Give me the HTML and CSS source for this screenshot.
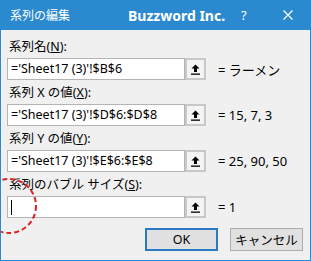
FILE: index.html
```html
<!DOCTYPE html>
<html lang="ja">

<head>
  <meta charset="utf-8">
  <title>系列の編集</title>
  <link rel="stylesheet" href="styles.css">
</head>

<body>
  <div class="window">
    <div class="titlebar">
      <span class="title">系列の編集</span>
      <span class="brand">Buzzword Inc.</span>
      <span class="help">?</span>
      <span class="close">
        <svg width="10" height="10" viewBox="0 0 10 10"><path d="M0.5 0.5L9.5 9.5M9.5 0.5L0.5 9.5" stroke="#fff" stroke-width="1.2" /></svg>
      </span>
    </div>
    <div class="content">
      <div class="field">
        <div class="label">系列名(<u>N</u>):</div>
        <div class="row">
          <div class="ref">='Sheet17 (3)'!$B$6</div>
          <div class="pick"><svg width="11" height="11" viewBox="0 0 11 11"><path d="M5.5 0.5L1.5 4.5H4V8H7V4.5H9.5Z" fill="#000" /><rect x="1" y="9.5" width="9" height="1.3" fill="#000" /></svg></div>
          <span class="value">= ラーメン</span>
        </div>
      </div>
      <div class="field">
        <div class="label">系列 X の値(<u>X</u>):</div>
        <div class="row">
          <div class="ref">='Sheet17 (3)'!$D$6:$D$8</div>
          <div class="pick"><svg width="11" height="11" viewBox="0 0 11 11"><path d="M5.5 0.5L1.5 4.5H4V8H7V4.5H9.5Z" fill="#000" /><rect x="1" y="9.5" width="9" height="1.3" fill="#000" /></svg></div>
          <span class="value">= 15, 7, 3</span>
        </div>
      </div>
      <div class="field">
        <div class="label">系列 Y の値(<u>Y</u>):</div>
        <div class="row">
          <div class="ref">='Sheet17 (3)'!$E$6:$E$8</div>
          <div class="pick"><svg width="11" height="11" viewBox="0 0 11 11"><path d="M5.5 0.5L1.5 4.5H4V8H7V4.5H9.5Z" fill="#000" /><rect x="1" y="9.5" width="9" height="1.3" fill="#000" /></svg></div>
          <span class="value">= 25, 90, 50</span>
        </div>
      </div>
      <div class="field">
        <div class="label">系列のバブル サイズ(<u>S</u>):</div>
        <div class="row">
          <div class="ref"><span class="caret"></span></div>
          <div class="pick"><svg width="11" height="11" viewBox="0 0 11 11"><path d="M5.5 0.5L1.5 4.5H4V8H7V4.5H9.5Z" fill="#000" /><rect x="1" y="9.5" width="9" height="1.3" fill="#000" /></svg></div>
          <span class="value">= 1</span>
        </div>
      </div>
      <div class="actions">
        <button class="btn btn-ok">OK</button>
        <button class="btn">キャンセル</button>
      </div>
    </div>
    <!-- 赤い点線の丸 -->
    <svg class="mark" width="40" height="60" viewBox="0 0 40 60">
      <circle cx="8" cy="28" r="27" fill="none" stroke="#d9252a" stroke-width="2" stroke-dasharray="5 3" />
    </svg>
  </div>
</body>

</html>
```

FILE: styles.css
```css
html {
  font-family: "Noto Sans", "Noto Sans CJK JP", sans-serif;
  font-size: 12px;
}

body {
  margin: 0;
}

.window {
  position: relative;
  width: 311px;
  height: 261px;
  box-sizing: border-box;
  background-color: #f0f0f0;
  border: 1px solid #2b89cf;
  border-top: 0;
  overflow: hidden;
}

.titlebar {
  height: 30px;
  margin: 0 -1px;
  background-color: #2b89cf;
  color: #fff;
  display: flex;
  align-items: center;
}

.title {
  margin-left: 10px;
  width: 118px;
}

.brand {
  font-size: 14px;
  font-weight: bold;
  width: 113px;
}

.help {
  font-size: 13px;
  width: 42px;
}

.close {
  display: flex;
}

.content {
  padding: 8px 7px 0 6px;
}

.field {
  margin-bottom: 4px;
}

.label {
  height: 18px;
  line-height: 18px;
  padding-left: 2px;
  margin-bottom: 2px;
  font-size: 12.5px;
}

.row {
  display: flex;
  align-items: center;
}

.ref {
  width: 178px;
  height: 22px;
  box-sizing: border-box;
  border: 1px solid #b4b4b4;
  background-color: #fff;
  padding-left: 3px;
  font-size: 12.5px;
  line-height: 20px;
  white-space: nowrap;
  overflow: hidden;
  display: flex;
  align-items: center;
}

.caret {
  display: block;
  width: 1px;
  height: 15px;
  background-color: #000;
}

.pick {
  width: 21px;
  height: 22px;
  box-sizing: border-box;
  border: 2px solid #c8c8c8;
  background-color: #f4f4f4;
  display: flex;
  justify-content: center;
  align-items: center;
}

.value {
  margin-left: 12px;
  font-size: 13px;
}

.actions {
  display: flex;
  justify-content: flex-end;
  gap: 12px;
  margin-top: 10px;
}

.btn {
  width: 73px;
  height: 23px;
  box-sizing: border-box;
  border: 1px solid #adadad;
  background-color: #e1e1e1;
  font: inherit;
  font-size: 12.5px;
  color: #000;
  padding: 0;
}

.btn-ok {
  border: 2px solid #2a79c4;
}

.mark {
  position: absolute;
  left: 0;
  top: 178px;
}
```
